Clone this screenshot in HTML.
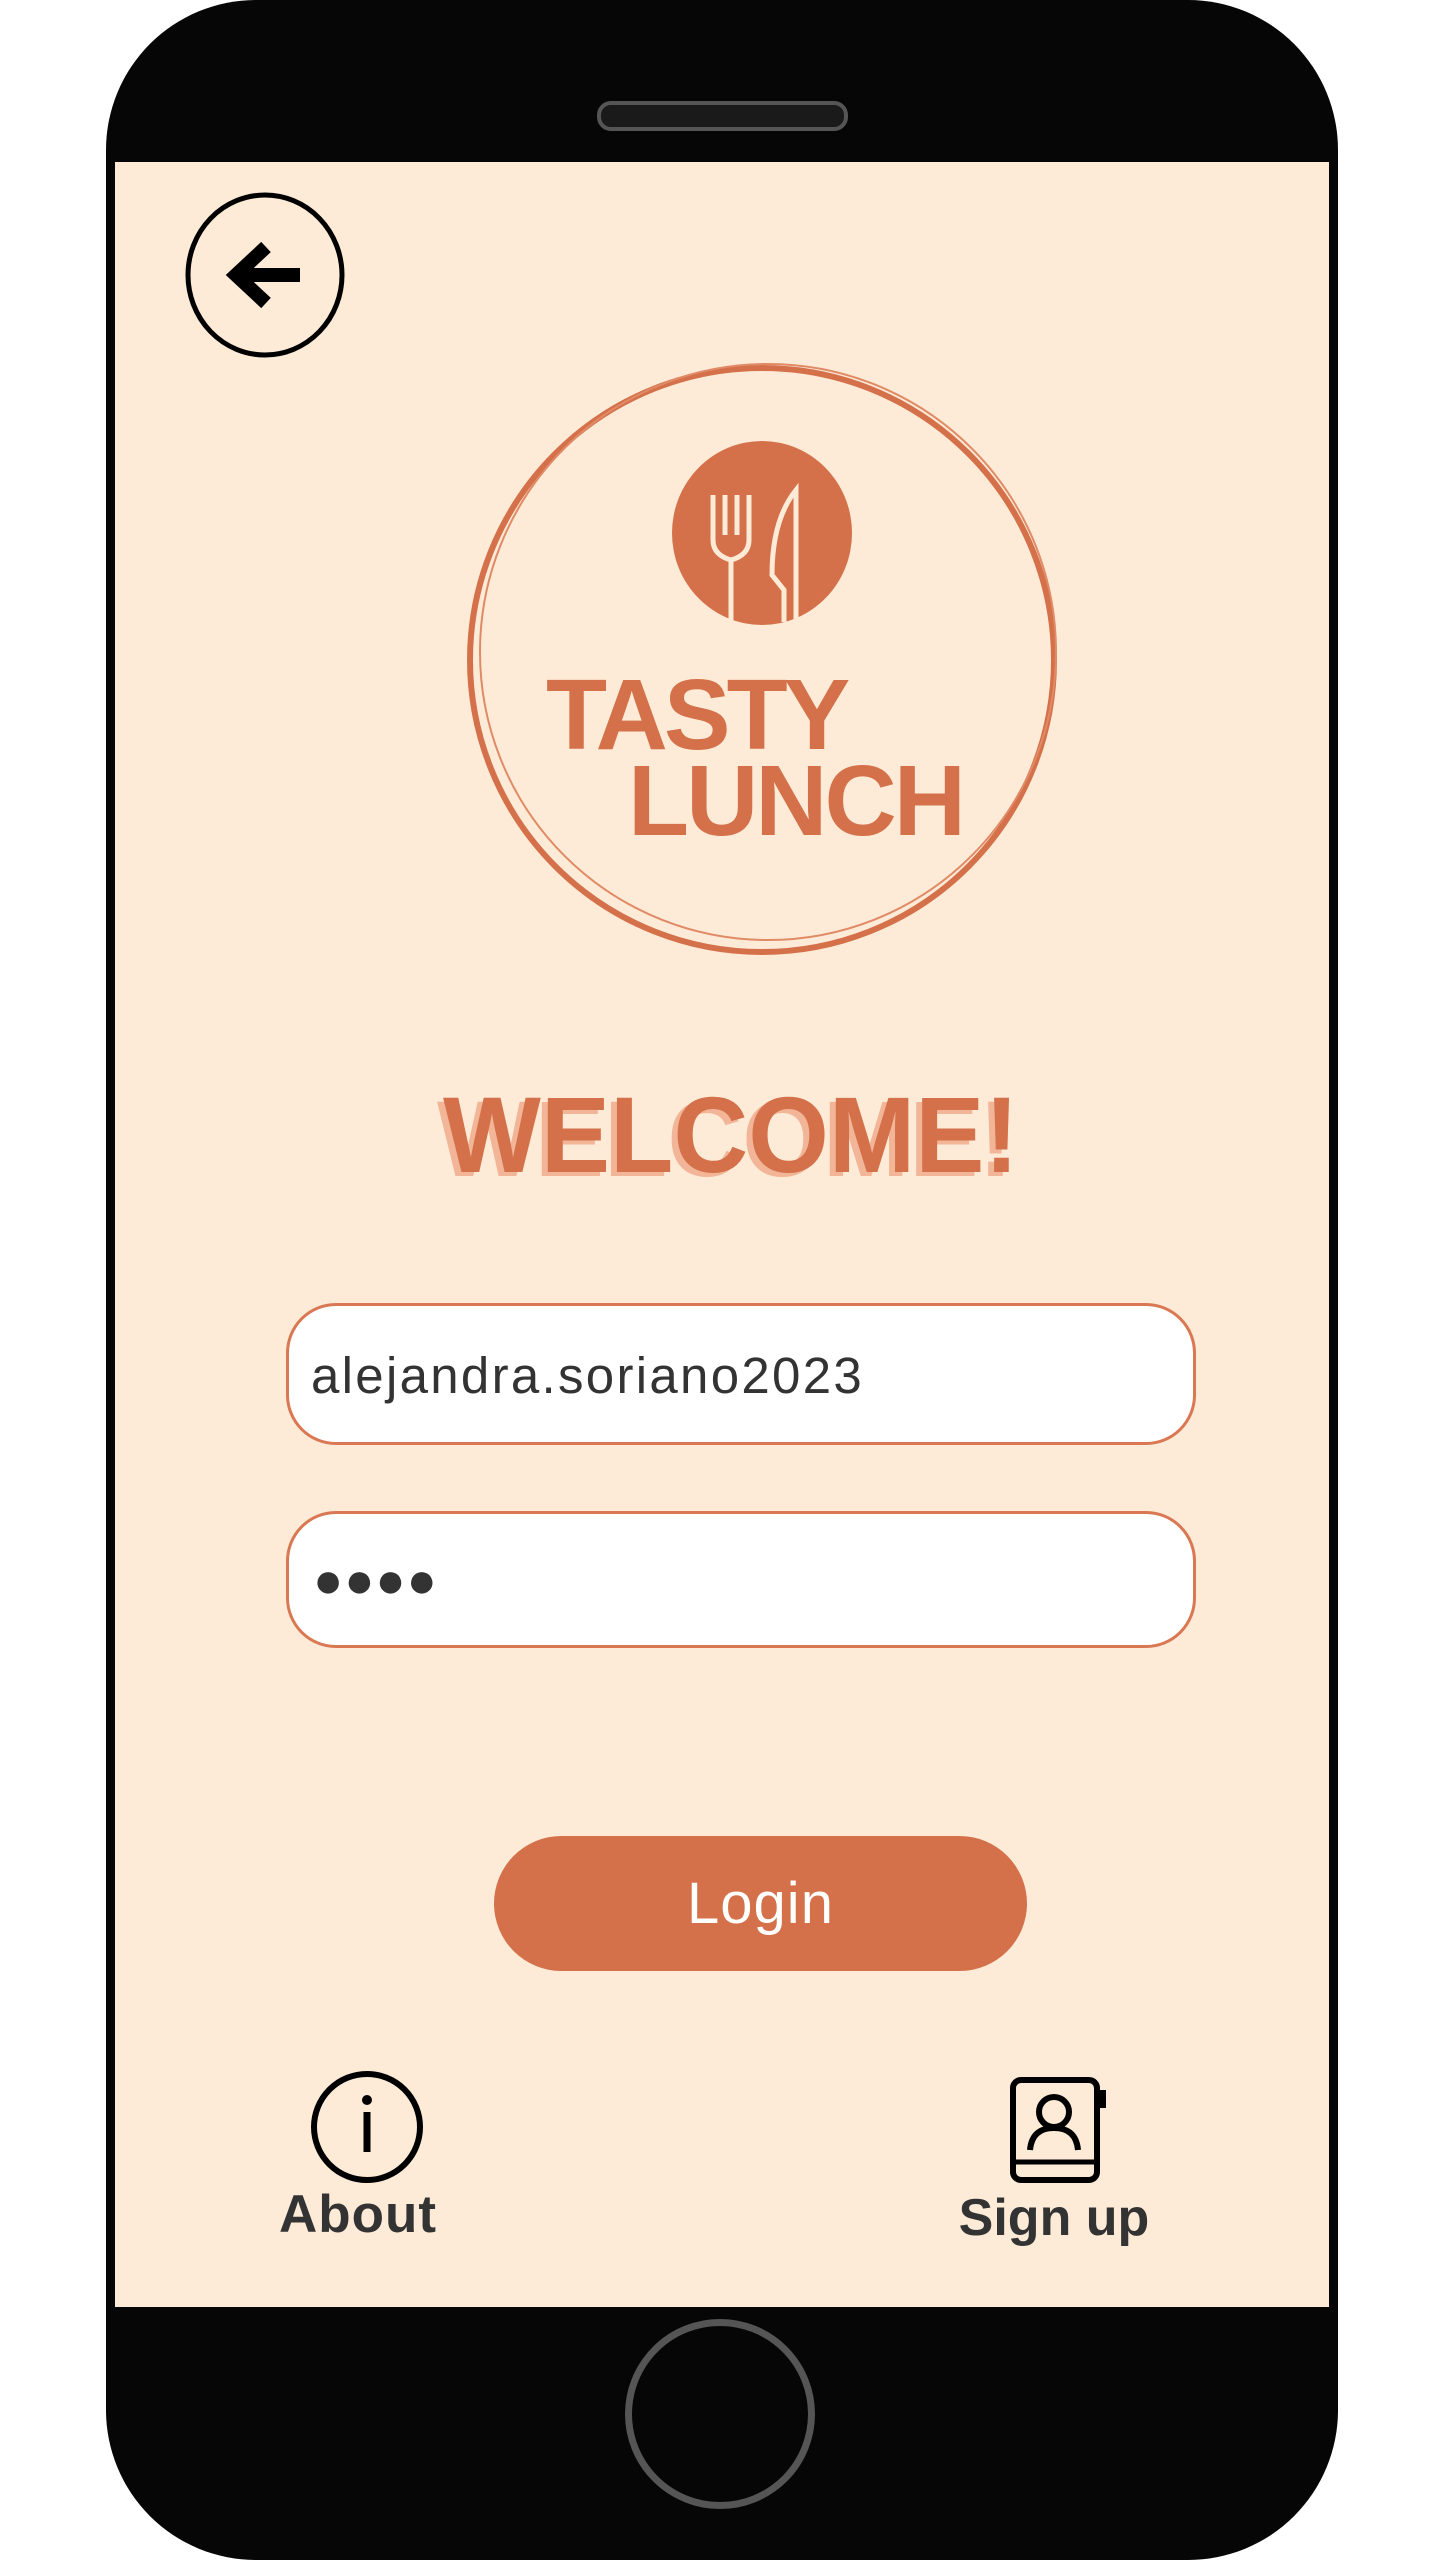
<!DOCTYPE html>
<html><head><meta charset="utf-8"><style>
html,body{margin:0;padding:0;width:1440px;height:2560px;background:#fff;overflow:hidden;font-family:"Liberation Sans",sans-serif}
.phone{position:absolute;left:106px;top:0;width:1232px;height:2560px;background:#060606;border-radius:150px}
.screen{position:absolute;left:115px;top:162px;width:1214px;height:2145px;background:#FDEBD7}
.spk{position:absolute;left:597px;top:101px;width:243px;height:22px;border:4px solid #555;border-radius:14px;background:#1a1a1a}
.home{position:absolute;left:625px;top:2319px;border:7px solid #555;border-radius:50%;box-sizing:border-box;width:190px;height:190px}
.abs{position:absolute}
.inp{position:absolute;left:286px;width:910px;background:#fff;border:3px solid #D97852;border-radius:50px;box-sizing:border-box}
.o{color:#D4714A;font-weight:bold}
</style></head><body>
<div class="phone"></div>
<div class="screen"></div>
<div class="spk"></div>
<div class="home"></div>

<svg class="abs" style="left:0;top:0" width="1440" height="2560">
 <ellipse cx="265" cy="275" rx="77" ry="80" fill="none" stroke="#000" stroke-width="5"/>
 <path d="M300 275 H238 M266 247 L236 275 L266 303" fill="none" stroke="#000" stroke-width="14"/>
 <circle cx="762" cy="660" r="292" fill="none" stroke="#D4714A" stroke-width="6"/>
 <circle cx="768" cy="652" r="288" fill="none" stroke="#E08A66" stroke-width="2"/>
 <ellipse cx="762" cy="533" rx="90" ry="92" fill="#D4714A"/>
 <g fill="none" stroke="#FDEBD7" stroke-width="5">
  <path d="M713 495 V540 Q713 555 731 560 Q749 555 749 540 V495 M725 495 V535 M737 495 V535 M731 560 V622"/>
  <path d="M784 622 V590 L772 575 Q772 520 796 490 V622"/>
 </g>
 <circle cx="367" cy="2127" r="53" fill="none" stroke="#000" stroke-width="6"/>
 <path d="M367 2112 V2152" stroke="#000" stroke-width="7"/>
 <circle cx="367" cy="2100" r="5" fill="#000"/>
 <rect x="1013" y="2080" width="84" height="100" rx="8" fill="none" stroke="#000" stroke-width="6"/>
 <rect x="1097" y="2090" width="9" height="18" fill="#000"/>
 <path d="M1013 2162 H1097" stroke="#000" stroke-width="5"/>
 <circle cx="1054" cy="2112" r="15" fill="none" stroke="#000" stroke-width="6"/>
 <path d="M1030 2150 Q1032 2128 1054 2128 Q1076 2128 1078 2150" fill="none" stroke="#000" stroke-width="6"/>
</svg>

<div class="abs o" style="left:546px;top:660px;font-size:100px;line-height:110px;letter-spacing:-4px">TASTY</div>
<div class="abs o" style="left:628px;top:746px;font-size:100px;line-height:110px;letter-spacing:-3px">LUNCH</div>

<div class="abs" style="left:0;width:1450px;top:1084px;text-align:center;font-size:108px;line-height:110px;font-weight:900;color:#F2B597;letter-spacing:0px;transform:scaleX(0.96)">WELCOME!</div>
<div class="abs" style="left:0;width:1462px;top:1080px;text-align:center;font-size:108px;line-height:110px;font-weight:900;color:#D4714A;letter-spacing:0px;transform:scaleX(0.96)">WELCOME!</div>

<div class="inp" style="top:1303px;height:142px"></div>
<div class="abs" style="left:311px;top:1346px;font-size:51px;line-height:60px;color:#333;letter-spacing:2.3px">alejandra.soriano2023</div>
<div class="inp" style="top:1511px;height:137px"></div>
<div class="abs" style="left:313px;top:1550px;font-size:50px;line-height:60px;color:#333;letter-spacing:1px">●●●●</div>

<div class="abs" style="left:494px;top:1836px;width:533px;height:135px;border-radius:68px;background:#D4714A;color:#fff;font-size:58px;line-height:135px;text-align:center;letter-spacing:1px">Login</div>

<div class="abs" style="left:258px;top:2185px;width:200px;text-align:center;font-size:53px;font-weight:bold;color:#333;line-height:60px;letter-spacing:1px">About</div>
<div class="abs" style="left:934px;top:2188px;width:240px;text-align:center;font-size:52px;font-weight:bold;color:#333;line-height:60px">Sign up</div>
</body></html>
